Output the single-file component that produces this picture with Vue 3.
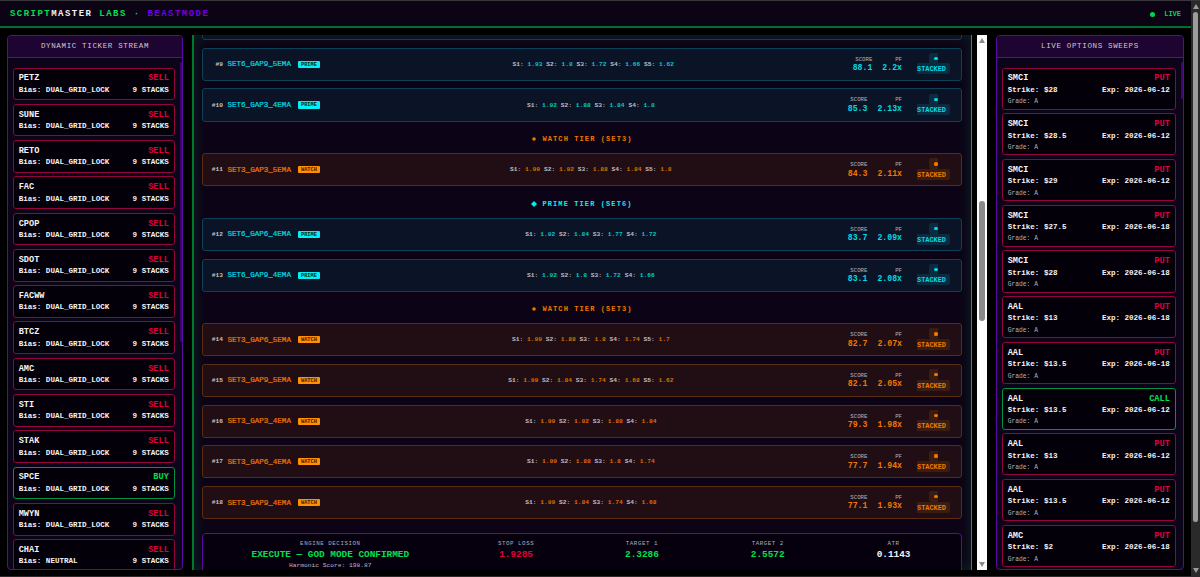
<template>
  <div class="screen">
    <div class="page">
      <header class="header">
        <div class="header__brand">SCRIPT<span class="header__white">MASTER</span> LABS · <span class="header__mode">BEASTMODE</span></div>
        <div class="header__live"><i class="header__dot"></i>LIVE</div>
      </header>

      <main class="columns">
        <section class="panel panel--left">
          <h2 class="panel__title">DYNAMIC TICKER STREAM</h2>
          <div class="panel__body">
            <div class="panel__list">
              <div v-for="t in tickers" :key="t.symbol" class="card" :class="{ 'card--up': t.side === 'BUY' }">
                <div class="card__line card__line--head"><span>{{ t.symbol }}</span><span class="card__side">{{ t.side }}</span></div>
                <div class="card__line"><span>Bias: {{ t.bias }}</span><span>9 STACKS</span></div>
              </div>
            </div>
            <div class="panel__track"><div class="panel__thumb panel__thumb--long"></div></div>
          </div>
        </section>

        <section class="grid">
          <div class="row row--prime row--cut"></div>
          <template v-for="item in feed" :key="item.key">
            <div v-if="item.tier" class="tier" :class="'tier--' + item.tier">
              <svg class="tier__icon" viewBox="0 0 6 6">
                <path v-if="item.tier === 'prime'" d="M3 0L6 3L3 6L0 3Z" />
                <circle v-else cx="3" cy="3" r="1.8" />
              </svg>
              <span>{{ item.tier === 'prime' ? 'PRIME TIER (SET6)' : 'WATCH TIER (SET3)' }}</span>
            </div>
            <div v-else class="row" :class="'row--' + item.kind">
              <div class="row__left">
                <span class="row__rank">#{{ item.rank }}</span>
                <span class="row__name">{{ item.name }}</span>
                <span class="row__badge">{{ item.kind.toUpperCase() }}</span>
              </div>
              <div class="row__stacks">
                <template v-for="(s, i) in item.stacks" :key="i">S{{ i + 1 }}: <b>{{ s }}</b>{{ ' ' }}</template>
              </div>
              <div class="row__right">
                <div class="metric"><span class="metric__label">SCORE</span><span class="metric__value">{{ item.score }}</span></div>
                <div class="metric"><span class="metric__label">PF</span><span class="metric__value">{{ item.pf }}x</span></div>
                <div class="stacked"><span class="stacked__text"><i class="stacked__dot"></i> STACKED</span></div>
              </div>
            </div>
          </template>

          <div class="decision">
            <div class="decision__cell">
              <span class="decision__label">ENGINE DECISION</span>
              <span class="decision__value decision__value--green">EXECUTE — GOD MODE CONFIRMED</span>
              <span class="decision__sub">Harmonic Score: 198.87</span>
            </div>
            <div v-for="d in levels" :key="d.label" class="decision__cell">
              <span class="decision__label">{{ d.label }}</span>
              <span class="decision__value" :class="'decision__value--' + d.tone">{{ d.value }}</span>
            </div>
          </div>
        </section>

        <div class="bar">
          <svg class="bar__arrow" viewBox="0 0 6 5"><path d="M3 0L6 5H0Z" /></svg>
          <div class="bar__thumb"></div>
          <svg class="bar__arrow bar__arrow--down" viewBox="0 0 6 5"><path d="M0 0H6L3 5Z" /></svg>
        </div>

        <section class="panel panel--right">
          <h2 class="panel__title">LIVE OPTIONS SWEEPS</h2>
          <div class="panel__body">
            <div class="panel__list">
              <div v-for="(o, i) in sweeps" :key="i" class="card card--tall" :class="{ 'card--up': o.side === 'CALL' }">
                <div class="card__line card__line--head"><span>{{ o.symbol }}</span><span class="card__side">{{ o.side }}</span></div>
                <div class="card__line"><span>Strike: ${{ o.strike }}</span><span>Exp: 2026-06-{{ o.day }}</span></div>
                <div class="card__grade">Grade: A</div>
              </div>
            </div>
            <div class="panel__track"><div class="panel__thumb"></div></div>
          </div>
        </section>
      </main>
    </div>

    <div class="bar bar--page">
      <svg class="bar__arrow" viewBox="0 0 6 5"><path d="M3 0L6 5H0Z" /></svg>
      <div class="bar__thumb"></div>
      <svg class="bar__arrow bar__arrow--down" viewBox="0 0 6 5"><path d="M0 0H6L3 5Z" /></svg>
    </div>
  </div>
</template>

<script setup>
const symbols = ['PETZ', 'SUNE', 'RETO', 'FAC', 'CPOP', 'SDOT', 'FACWW', 'BTCZ', 'AMC', 'STI', 'STAK', 'SPCE', 'MWYN', 'CHAI']

const tickers = symbols.map((symbol) => ({
  symbol,
  side: symbol === 'SPCE' ? 'BUY' : 'SELL',
  bias: symbol === 'CHAI' ? 'NEUTRAL' : 'DUAL_GRID_LOCK'
}))

const sweep = (symbol, strike, day, side = 'PUT') => ({ symbol, strike, day, side })

const sweeps = [
  sweep('SMCI', '28', 12),
  sweep('SMCI', '28.5', 12),
  sweep('SMCI', '29', 12),
  sweep('SMCI', '27.5', 18),
  sweep('SMCI', '28', 18),
  sweep('AAL', '13', 18),
  sweep('AAL', '13.5', 18),
  sweep('AAL', '13.5', 12, 'CALL'),
  sweep('AAL', '13', 12),
  sweep('AAL', '13.5', 12),
  sweep('AMC', '2', 18)
]

const row = (rank, kind, suffix, stacks, score, pf) => ({
  key: 'row' + rank,
  rank,
  kind,
  name: (kind === 'prime' ? 'SET6_' : 'SET3_') + suffix,
  stacks,
  score,
  pf
})

const feed = [
  row(9, 'prime', 'GAP9_5EMA', ['1.93', '1.8', '1.72', '1.66', '1.62'], '88.1', '2.2'),
  row(10, 'prime', 'GAP3_4EMA', ['1.92', '1.88', '1.84', '1.8'], '85.3', '2.13'),
  { key: 'tier1', tier: 'watch' },
  row(11, 'watch', 'GAP3_5EMA', ['1.99', '1.92', '1.88', '1.84', '1.8'], '84.3', '2.11'),
  { key: 'tier2', tier: 'prime' },
  row(12, 'prime', 'GAP6_4EMA', ['1.92', '1.84', '1.77', '1.72'], '83.7', '2.09'),
  row(13, 'prime', 'GAP9_4EMA', ['1.92', '1.8', '1.72', '1.66'], '83.1', '2.08'),
  { key: 'tier3', tier: 'watch' },
  row(14, 'watch', 'GAP6_5EMA', ['1.99', '1.88', '1.8', '1.74', '1.7'], '82.7', '2.07'),
  row(15, 'watch', 'GAP9_5EMA', ['1.99', '1.84', '1.74', '1.68', '1.62'], '82.1', '2.05'),
  row(16, 'watch', 'GAP3_4EMA', ['1.99', '1.92', '1.88', '1.84'], '79.3', '1.98'),
  row(17, 'watch', 'GAP6_4EMA', ['1.99', '1.88', '1.8', '1.74'], '77.7', '1.94'),
  row(18, 'watch', 'GAP9_4EMA', ['1.99', '1.84', '1.74', '1.68'], '77.1', '1.93')
]

const levels = [
  { label: 'STOP LOSS', value: '1.9285', tone: 'red' },
  { label: 'TARGET 1', value: '2.3286', tone: 'green' },
  { label: 'TARGET 2', value: '2.5572', tone: 'green' },
  { label: 'ATR', value: '0.1143', tone: 'white' }
]
</script>

<style>
body {
  margin: 0;
  background: #000;
  overflow: hidden;
}
</style>

<style scoped>
.screen {
  display: flex;
  box-sizing: border-box;
  width: 1200px;
  height: 577px;
  border-top: 1px solid #38383a;
  border-bottom: 1px solid #2c2a2c;
  background: #000;
  color: #f4f4f4;
  font-family: "Courier New", "Liberation Mono", monospace;
  font-weight: bold;
  overflow: hidden;
}

.page {
  flex: 1;
  min-width: 0;
  display: flex;
  flex-direction: column;
}

/* header */
.header {
  display: flex;
  align-items: center;
  justify-content: space-between;
  box-sizing: border-box;
  height: 27px;
  padding: 0 10px;
  border-bottom: 2px solid #00702e;
  background: #0c0414;
}

.header__brand {
  padding-top: 1px;
  color: #00e052;
  font-size: 9px;
  letter-spacing: 1.47px;
  white-space: pre;
}

.header__white {
  color: #f2f2f2;
}

.header__mode {
  color: #7200e0;
}

.header__live {
  display: flex;
  align-items: center;
  gap: 9.5px;
  padding-top: 1px;
  color: #00d652;
  font-size: 7px;
}

.header__dot {
  width: 5px;
  height: 5px;
  border-radius: 50%;
  background: #00d652;
}

/* layout */
.columns {
  flex: 1;
  min-height: 0;
  display: flex;
  padding: 7px 7px 6px;
}

.panel {
  display: flex;
  flex-direction: column;
  box-sizing: border-box;
  border: 1px solid #5a0aa0;
  border-radius: 4px;
  background: #0c0418;
  overflow: hidden;
}

.panel--left {
  width: 176px;
  margin-right: 9px;
}

.panel--right {
  width: 188px;
  margin-left: 9px;
}

.panel__title {
  box-sizing: border-box;
  height: 22px;
  margin: 0;
  border-bottom: 1px solid #5a0aa0;
  background: #1e0430;
  color: #d0c8d4;
  font-size: 7.5px;
  font-weight: normal;
  letter-spacing: 0.65px;
  line-height: 20px;
  text-align: center;
}

.panel__body {
  flex: 1;
  min-height: 0;
  display: flex;
}

.panel__list {
  flex: 1;
  padding: 9.5px 5px 0;
  overflow: hidden;
}

.panel__track {
  width: 2.5px;
  padding-top: 4px;
}

.panel__thumb {
  height: 37px;
  border-radius: 2px;
  background: #3c066c;
}

.panel__thumb--long {
  height: 280px;
}

/* cards */
.card {
  box-sizing: border-box;
  height: 32.7px;
  margin-bottom: 3.6px;
  padding: 4.9px 4.7px 0;
  border: 1px solid #94043c;
  border-radius: 3px;
  background: #04000a;
}

.card--tall {
  height: 42.1px;
  margin-bottom: 3.65px;
}

.card--up {
  border-color: #009440;
}

.card__line {
  display: flex;
  justify-content: space-between;
  font-size: 7.55px;
  line-height: 11.4px;
}

.card__line--head {
  font-size: 8.6px;
}

.card__side {
  color: #e0003c;
}

.card--up .card__side {
  color: #00e052;
}

.card__grade {
  color: #b0b0b0;
  font-size: 6.3px;
  font-weight: normal;
  line-height: 11.6px;
}

/* center */
.grid {
  flex: 1;
  min-width: 0;
  box-sizing: border-box;
  padding: 0 9px 0 8px;
  border-left: 2px solid #00782e;
  border-right: 1px solid #00a84a;
  background: #0c0416;
  box-shadow: inset 0 0 14px rgba(0, 255, 136, 0.13);
  overflow: hidden;
}

.row {
  display: flex;
  align-items: center;
  justify-content: space-between;
  box-sizing: border-box;
  height: 33.2px;
  margin-bottom: 7.5px;
  padding: 0 11px 0 8.5px;
  border: 1px solid #0b4258;
  border-radius: 3px;
  background: #0a1426;
  color: #00dce4;
}

.row--cut {
  margin-top: -27.9px;
}

.row--watch {
  border-color: #5a2c10;
  background: #200e14;
  color: #f07800;
}

.row__left {
  display: flex;
  align-items: center;
  padding-right: 14px;
}

.row__rank {
  width: 11.5px;
  margin-right: 4.5px;
  color: #c4c4c8;
  font-size: 6.2px;
  text-align: right;
}

.row__name {
  font-size: 7.55px;
  font-weight: normal;
  -webkit-text-stroke: 0.2px currentColor;
}

.row__badge {
  width: 22px;
  margin-left: 7px;
  padding-top: 1px;
  border-radius: 1px;
  background: #00f0f8;
  color: #04242c;
  font-size: 5.3px;
  line-height: 6.2px;
  text-align: center;
}

.row--watch .row__badge {
  background: #ff9000;
  color: #3c1c00;
}

.row__stacks {
  color: #c0bcc4;
  font-size: 6.25px;
}

.row__stacks b {
  color: #00c8cc;
}

.row--watch .row__stacks b {
  color: #dc6c00;
}

.row__right {
  display: flex;
  align-items: center;
}

.metric {
  display: flex;
  flex-direction: column;
  align-items: flex-end;
  margin-right: 10px;
}

.metric__label {
  color: #b4b2ba;
  font-size: 5.7px;
  font-weight: normal;
  line-height: 8.4px;
}

.metric__value {
  padding-bottom: 1px;
  font-size: 8.2px;
  line-height: 7.8px;
}

.stacked {
  width: 33px;
  margin-left: 5px;
  padding-bottom: 0.8px;
  font-size: 6.9px;
  line-height: 10.4px;
  text-align: center;
}

.stacked__text {
  padding: 1.5px 4.5px 1.5px 0;
  border-radius: 2px;
  background: #0a2c40;
}

.row--watch .stacked__text {
  background: #3a1c12;
}

.stacked__dot {
  display: inline-block;
  width: 3.2px;
  height: 3.2px;
  margin-left: 5px;
  border-radius: 50%;
  background: currentColor;
  vertical-align: 0.4px;
}

.tier {
  display: flex;
  align-items: center;
  justify-content: center;
  gap: 5px;
  height: 20.2px;
  margin-bottom: 3.8px;
  font-size: 7px;
  letter-spacing: 1.1px;
}

.tier__icon {
  width: 6px;
  height: 6px;
  fill: currentColor;
}

.tier--prime {
  color: #00f0f0;
}

.tier--watch {
  color: #f07800;
}

/* decision */
.decision {
  display: grid;
  grid-template-columns: 2fr 1fr 1fr 1fr 1fr;
  gap: 6px;
  height: 60px;
  margin-top: 14.3px;
  padding: 4.6px 7.5px;
  border: 1px solid #5e08a4;
  border-radius: 4px;
  background: #06000e;
}

.decision__cell {
  display: flex;
  flex-direction: column;
  align-items: center;
  white-space: nowrap;
}

.decision__label {
  color: #b0acb4;
  font-size: 5.8px;
  font-weight: normal;
  letter-spacing: 0.55px;
  line-height: 10px;
}

.decision__value {
  font-size: 9.4px;
  line-height: 11.5px;
}

.decision__value--green {
  color: #00e052;
}

.decision__value--red {
  color: #e0003c;
}

.decision__value--white {
  color: #f4f4f4;
}

.decision__sub {
  color: #bcb8c0;
  font-size: 6.25px;
  font-weight: normal;
  line-height: 10px;
}

/* scrollbars */
.bar {
  display: flex;
  flex-direction: column;
  align-items: center;
  box-sizing: border-box;
  width: 10px;
  margin-left: 5px;
  padding: 3px 0;
  background: #fcfcfc;
}

.bar__arrow {
  width: 6px;
  height: 5px;
  fill: #8a8a8a;
}

.bar__arrow--down {
  margin-top: auto;
}

.bar__thumb {
  width: 5.5px;
  height: 120px;
  margin-top: 158px;
  border-radius: 3px;
  background: #8a8a8a;
}

.bar--page {
  width: 9px;
  margin-left: 0;
  background: #2a2a2a;
}

.bar--page .bar__thumb {
  height: 510px;
  margin-top: 3px;
  background: #9c9c9c;
}

.bar--page .bar__arrow {
  fill: #9c9c9c;
}
</style>
